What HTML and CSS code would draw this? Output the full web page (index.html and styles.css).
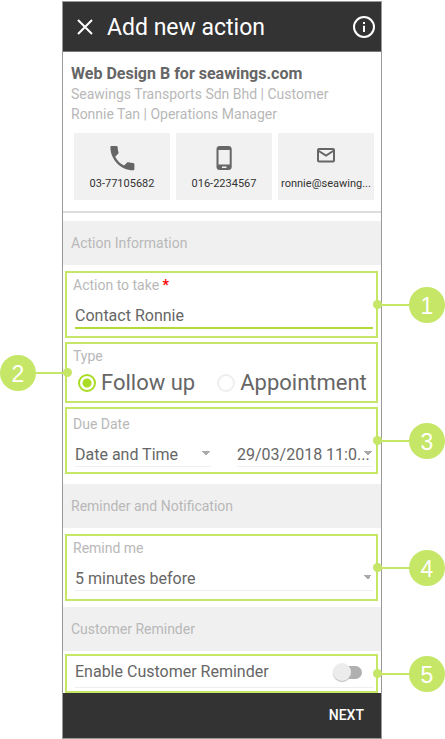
FILE: index.html
```html
<!DOCTYPE html>
<html lang="en">
<head>
<meta charset="utf-8">
<meta name="viewport" content="width=device-width, initial-scale=1">
<title>Add new action</title>
<link rel="stylesheet" href="styles.css">
</head>
<body>
<main class="phone">
  <header class="bar">
    <button class="icon-button" type="button" aria-label="Close">
      <svg width="16" height="16" viewBox="0 0 16 16" fill="none" stroke="#fff" stroke-width="2"><path d="M1 1l14 14M15 1L1 15"/></svg>
    </button>
    <h1 class="title">Add new action</h1>
    <button class="icon-button" type="button" aria-label="Information">
      <svg width="22" height="22" viewBox="0 0 22 22" fill="none" stroke="#fff" stroke-width="2"><circle cx="11" cy="11" r="10"/><path d="M11 9.7v6.3M11 6v2"/></svg>
    </button>
  </header>

  <section class="summary">
    <h2 class="deal">Web Design B for seawings.com</h2>
    <p class="meta">Seawings Transports Sdn Bhd | Customer</p>
    <p class="meta">Ronnie Tan | Operations Manager</p>
    <div class="contacts">
      <a class="contact" href="tel:0377105682">
        <svg class="contact-icon" viewBox="0 0 26 26" fill="#666"><path d="M2.400 1h4.900c.8 0 1.400.6 1.400 1.400 0 1.700.3 3.400.8 4.900.2.500 0 1-.3 1.400l-3 3c2 3.900 5 7 8.900 8.900l3-3c.4-.4.900-.5 1.400-.3 1.500.5 3.200.8 4.500.8.800 0 1.400.6 1.400 1.400v4.400c0 .8-.6 1.300-1.400 1.300C12 25.200 1.400 14.700 1.400 2.200 1.400 1.500 1.700 1 2.400 1z"/></svg>
        <span>03-77105682</span>
      </a>
      <a class="contact" href="tel:0162234567">
        <svg class="contact-icon" viewBox="0 0 26 26"><path fill="#666" fill-rule="evenodd" d="M8.500 1h9.200c1.700 0 3 1.300 3 3v18c0 1.700-1.300 3-3 3H8.500c-1.700 0-3-1.300-3-3V4c0-1.700 1.300-3 3-3zM7.500 5v14.500h11.200V5zM11 21.500v1.500h4.500v-1.500z"/></svg>
        <span>016-2234567</span>
      </a>
      <a class="contact" href="mailto:ronnie@seawings.com">
        <svg class="contact-icon" viewBox="0 0 26 26" fill="none" stroke="#666" stroke-width="2"><rect x="5" y="4" width="16" height="12.500" rx="1"/><path d="M5 5.500l8 5 8-5"/></svg>
        <span>ronnie@seawing...</span>
      </a>
    </div>
  </section>

  <form class="form">
    <h3 class="section">Action Information</h3>

    <div class="group">
      <label class="label" for="action">Action to take <b class="required">*</b></label>
      <input class="text-input" id="action" type="text" value="Contact Ronnie">
      <span class="callout">1</span>
    </div>

    <div class="group group-type" role="radiogroup" aria-labelledby="type-label">
      <span class="label" id="type-label">Type</span>
      <div class="radios">
        <label class="radio"><input type="radio" name="type" checked>Follow up</label>
        <label class="radio"><input type="radio" name="type">Appointment</label>
      </div>
      <span class="callout callout-left">2</span>
    </div>

    <div class="group group-due">
      <label class="label" for="due-kind">Due Date</label>
      <div class="due">
        <select class="select" id="due-kind"><option>Date and Time</option></select>
        <select class="select" aria-label="Due date and time"><option>29/03/2018 11:0...</option></select>
      </div>
      <span class="callout">3</span>
    </div>

    <h3 class="section section-spaced">Reminder and Notification</h3>

    <div class="group group-remind">
      <label class="label" for="remind">Remind me</label>
      <select class="select" id="remind"><option>5 minutes before</option></select>
      <span class="callout">4</span>
    </div>

    <h3 class="section">Customer Reminder</h3>

    <div class="group group-toggle">
      <div class="toggle-row">
        <label for="enable">Enable Customer Reminder</label>
        <input class="switch" id="enable" type="checkbox" role="switch">
      </div>
      <span class="callout">5</span>
    </div>
  </form>

  <footer class="footer">
    <button class="next" type="button">NEXT</button>
  </footer>
</main>
</body>
</html>
```
FILE: styles.css
```css
* {
  box-sizing: border-box;
}

body {
  margin: 0;
  background: #fff;
  color: #666;
  font-family: Roboto, "Liberation Sans", sans-serif;
}

h1, h2, h3, p {
  margin: 0;
  font-weight: 400;
}

button, input, select {
  font: inherit;
  color: inherit;
  margin: 0;
}

.phone {
  margin: 1px 63px 0 62px;
  border: 1px solid #999;
}

.bar {
  display: flex;
  align-items: center;
  gap: 14px;
  height: 50px;
  padding: 0 6px 0 14px;
  background: #333;
  border-bottom: 1px solid #777;
  color: #fff;
}

.icon-button {
  display: flex;
  padding: 0;
  border: 0;
  background: none;
}

.title {
  flex: 1;
  padding-top: 2px;
  font-size: 23px;
  line-height: 32px;
}

.summary {
  padding: 12px 7px 11px 8px;
  border-bottom: 2px solid #ddd;
}

.deal {
  font-size: 16px;
  line-height: 20px;
  font-weight: 700;
}

.meta {
  font-size: 14px;
  line-height: 20px;
  color: #b8b8b8;
}

.contacts {
  display: flex;
  gap: 6px;
  margin: 9px 0 0 3px;
}

.contact {
  flex: 1 1 0;
  min-width: 0;
  display: flex;
  flex-direction: column;
  align-items: center;
  gap: 4px;
  padding: 12px 0 8px;
  background: #f1f1f1;
  color: #333;
  font-size: 11px;
  line-height: 17px;
  text-decoration: none;
  white-space: nowrap;
}

.contact-icon {
  width: 26px;
  height: 26px;
}

.form {
  padding-top: 8px;
}

.section {
  padding: 12px 8px;
  background: #f0f0f0;
  color: #b8b8b8;
  font-size: 14px;
  line-height: 20px;
}

.group + .section {
  margin-top: 6px;
}

.group + .section-spaced {
  margin-top: 10px;
}

.group {
  position: relative;
  margin: 4px 3px 0 2px;
  padding: 3px 3px 7px 6px;
  border: 2px solid #c5e666;
}

.section + .group {
  margin-top: 6px;
}

.group-type {
  padding-bottom: 4px;
}

.group-due {
  padding-top: 6px;
  padding-bottom: 5px;
}

.group-remind {
  padding-bottom: 8px;
}

.label {
  display: block;
  font-size: 14px;
  line-height: 18px;
  color: #b8b8b8;
}

.required {
  color: #f00;
}

.text-input,
.select {
  display: block;
  width: calc(100% - 2px);
  height: 31px;
  margin: 3px 0 0 2px;
  padding: 6px 0 0;
  border: 0;
  border-bottom: 1px solid #eee;
  border-radius: 0;
  outline: 0;
  background: transparent;
  font-size: 16px;
}

.text-input {
  margin-top: 4px;
  border-bottom: 2px solid #b1dc38;
}

.select {
  appearance: none;
  background: conic-gradient(from 315deg at 50% 100%, #aaa 90deg, transparent 0) right 1px top 15px / 8px 4px no-repeat;
}

.radios {
  display: flex;
  gap: 22px;
  padding: 4px 0 0 5px;
}

.radio {
  display: flex;
  align-items: center;
  gap: 5px;
  font-size: 22px;
  line-height: 28px;
}

.radio input {
  appearance: none;
  width: 18px;
  height: 18px;
  border: 2px solid #eee;
  border-radius: 50%;
}

.radio input:checked {
  border-color: #aadb25;
  background: radial-gradient(circle, #aadb25 4px, transparent 5px);
}

.due {
  display: flex;
  gap: 24px;
}

.due .select {
  flex: 1 1 0;
  min-width: 0;
}

.section + .group-toggle {
  margin-top: 3px;
  padding-top: 1px;
  padding-bottom: 3px;
}

.toggle-row {
  display: flex;
  align-items: center;
  justify-content: space-between;
  margin-left: 2px;
  padding-right: 11px;
  border-bottom: 1px solid #eee;
  font-size: 16px;
  line-height: 30px;
}

.switch {
  appearance: none;
  position: relative;
  width: 28px;
  height: 13px;
  border-radius: 7px;
  background: #b0b0b0;
}

.switch::before {
  content: "";
  position: absolute;
  left: -1px;
  top: -3px;
  width: 18px;
  height: 18px;
  border-radius: 50%;
  background: #ececec;
  box-shadow: 0 1px 1px #bbb;
}

/* Numbered markers joined to the edge of their group */
.callout {
  position: absolute;
  top: 50%;
  right: -69px;
  width: 36px;
  height: 36px;
  margin-top: -18px;
  border-radius: 50%;
  background: #c5e666;
  color: #fff;
  font-family: "Liberation Sans", sans-serif;
  font-size: 23px;
  line-height: 38px;
  text-align: center;
}

.callout::before {
  content: "";
  position: absolute;
  top: 17px;
  right: 35px;
  width: 33px;
  height: 2px;
  background: #c5e666;
}

.callout::after {
  content: "";
  position: absolute;
  top: 13px;
  right: 63px;
  width: 9px;
  height: 9px;
  border-radius: 50%;
  background: #c5e666;
}

.callout-left {
  right: auto;
  left: -67px;
}

.callout-left::before {
  right: auto;
  left: 35px;
}

.callout-left::after {
  right: auto;
  left: 63px;
}

.footer {
  display: flex;
  justify-content: flex-end;
  padding: 12px 17px 13px;
  background: #333;
}

.next {
  padding: 0;
  border: 0;
  background: none;
  color: #fff;
  font-size: 14px;
  line-height: 20px;
  font-weight: 500;
}
```
